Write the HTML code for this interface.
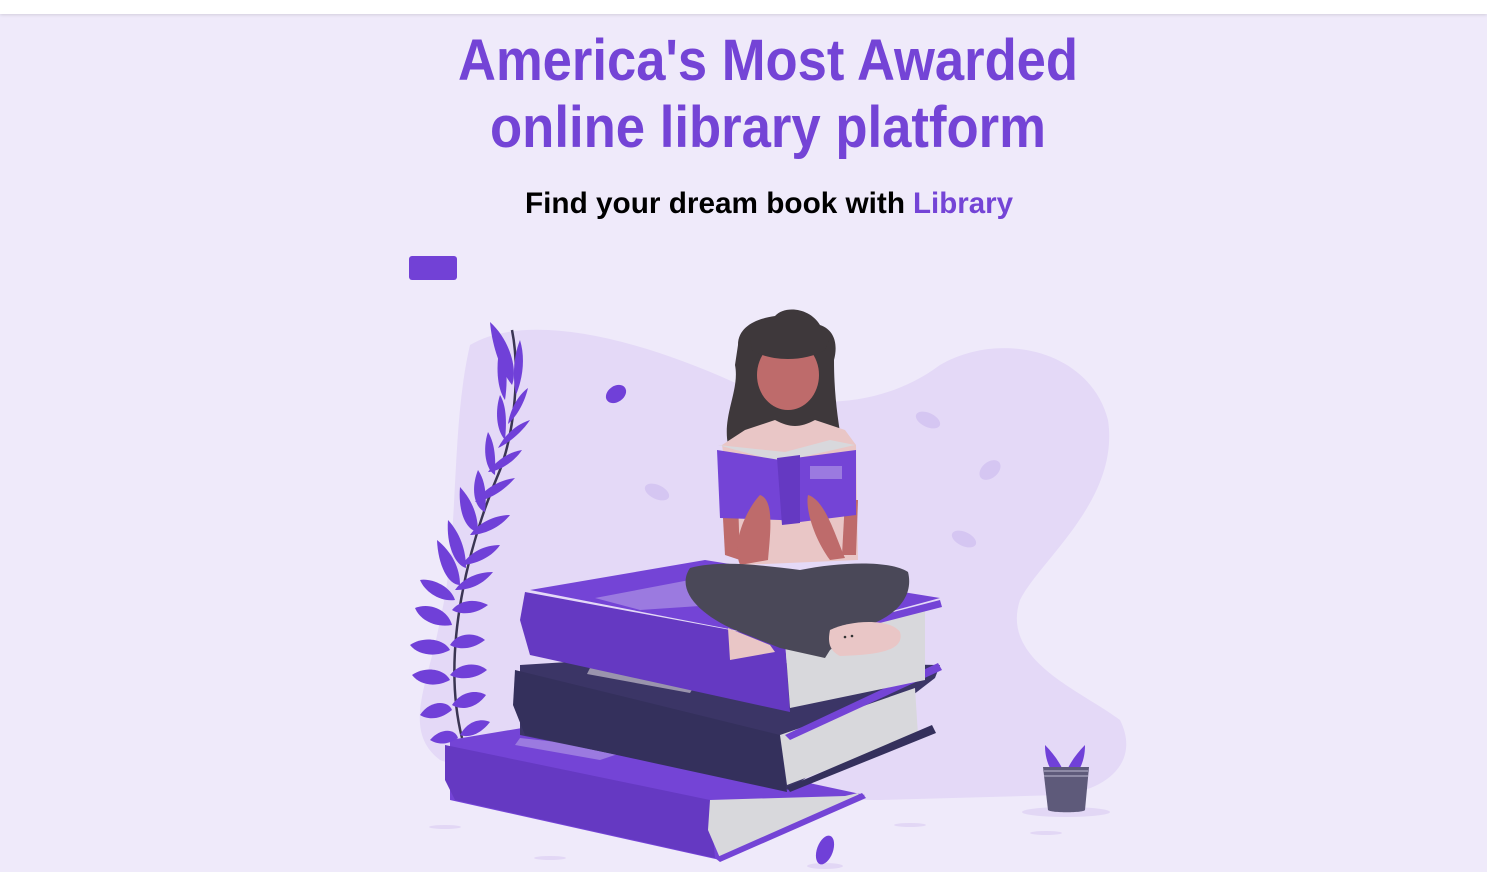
<!DOCTYPE html>
<html><head><meta charset="utf-8"><style>
html,body{margin:0;padding:0;width:1487px;height:872px;overflow:hidden;background:#efeafa;}
.top{position:absolute;left:0;top:0;width:1487px;height:14px;background:#fff;box-shadow:0 1px 3px rgba(0,0,0,0.12);}
svg{position:absolute;left:0;top:0;}
</style></head><body>
<svg width="1487" height="872" viewBox="0 0 1487 872" xmlns="http://www.w3.org/2000/svg">
<rect width="1487" height="872" fill="#efeafa"/>
<g font-family="Liberation Sans, sans-serif" font-weight="bold" text-anchor="start">
<text x="458" y="80" font-size="58" fill="#7444d6" textLength="620" lengthAdjust="spacingAndGlyphs">America's Most Awarded</text>
<text x="490" y="147" font-size="58" fill="#7444d6" textLength="556" lengthAdjust="spacingAndGlyphs">online library platform</text>
<text x="525" y="213" font-size="30" fill="#000" textLength="380" lengthAdjust="spacingAndGlyphs">Find your dream book with</text>
<text x="913" y="213" font-size="30" fill="#7444d6" textLength="100" lengthAdjust="spacingAndGlyphs">Library</text>
</g>
<rect x="409" y="256" width="48" height="24" rx="3" fill="#7241d6"/>
<!-- blob -->
<path d="M470,345 C520,315 620,330 740,385 C800,410 880,410 940,365 C1000,330 1090,350 1108,420 C1120,500 1040,560 1020,600 C1000,660 1080,690 1120,720 C1140,760 1110,790 1060,795 L880,800 C700,800 520,790 440,760 C400,730 430,680 440,620 C460,540 450,430 470,345 Z" fill="#e4d9f7"/>
<!-- shadows -->
<ellipse cx="1066" cy="812" rx="44" ry="5" fill="#e2d7f5"/>
<ellipse cx="445" cy="827" rx="16" ry="2" fill="#e2d7f5"/>
<ellipse cx="910" cy="825" rx="16" ry="2" fill="#e2d7f5"/>
<ellipse cx="550" cy="858" rx="16" ry="2" fill="#e2d7f5"/>
<ellipse cx="1046" cy="833" rx="16" ry="2" fill="#e2d7f5"/>
<ellipse cx="825" cy="866" rx="18" ry="3" fill="#e2d7f5"/>
<!-- bottom book -->
<polygon points="450,740 540,725 865,795 720,860 450,800" fill="#7444d6"/>
<polygon points="445,745 710,800 715,858 455,800 445,780" fill="#6539c2"/>
<polygon points="520,738 630,750 600,760 515,745" fill="#9b7ae0"/>
<polygon points="710,800 845,796 858,793 862,800 720,858 708,830" fill="#d8d8dc"/>
<polygon points="715,858 862,793 866,798 720,862" fill="#7444d6"/>
<!-- middle book -->
<polygon points="520,665 600,660 940,665 935,678 790,790 520,735" fill="#3b3566"/>
<polygon points="515,670 780,735 787,792 525,735 513,705" fill="#34305c"/>
<polygon points="590,668 695,685 690,693 587,674" fill="#9a94ad"/>
<polygon points="780,735 915,688 918,735 787,785" fill="#d8d8dc"/>
<polygon points="787,787 932,725 936,733 790,792" fill="#34305c"/>
<polygon points="785,735 938,663 942,670 790,740" fill="#7444d6"/>
<!-- top book -->
<polygon points="530,590 705,560 940,598 785,640" fill="#7444d6"/>
<polygon points="595,598 700,578 790,600 640,610" fill="#9b7ae0"/>
<polygon points="525,592 785,640 790,712 530,655 520,620" fill="#6539c2"/>
<polygon points="785,640 925,605 925,680 790,708" fill="#d8d8dc"/>
<polygon points="785,640 940,600 942,607 790,646" fill="#7444d6"/>
<!-- woman -->
<path d="M738,345 C738,325 760,318 775,316 C785,305 810,308 820,325 C835,330 838,345 834,360 C834,395 838,420 842,445 L728,445 C722,415 740,390 735,365 Z" fill="#3e383b"/>
<ellipse cx="788" cy="375" rx="31" ry="35" fill="#be6b6b"/>
<path d="M752,350 C770,362 805,362 825,350 L830,338 L750,338 Z" fill="#3e383b"/>
<path d="M775,420 C790,428 800,428 815,420 L845,430 L856,445 L858,560 L740,565 L722,445 L745,430 Z" fill="#e9c6c6"/>
<path d="M722,500 L738,500 L740,560 L725,555 Z" fill="#be6b6b"/>
<path d="M845,500 L858,500 L856,555 L842,555 Z" fill="#be6b6b"/>
<polygon points="718,445 785,452 830,440 855,445 780,462" fill="#d8d8dc"/>
<polygon points="717,450 780,460 780,520 720,518" fill="#7444d6"/>
<polygon points="780,460 856,450 856,515 800,522 780,520" fill="#7444d6"/>
<polygon points="777,458 800,455 800,523 782,525" fill="#6539c2"/>
<rect x="810" y="466" width="32" height="13" fill="#9b7ae0"/>
<path d="M760,495 C775,500 770,535 768,560 L740,565 C730,540 750,505 760,495 Z" fill="#be6b6b"/>
<path d="M808,495 C825,500 835,535 845,558 L830,560 C815,540 805,510 808,495 Z" fill="#be6b6b"/>
<path d="M690,568 C720,560 760,565 800,570 C840,562 890,560 908,572 C915,600 890,620 860,628 L830,650 L825,658 L780,648 L735,630 C700,615 675,590 690,568 Z" fill="#4a4858"/>
<path d="M830,630 C850,620 890,618 900,632 C905,650 880,655 840,656 C828,650 828,640 830,630 Z" fill="#e9c6c6"/>
<path d="M728,628 L770,645 L775,652 L730,660 Z" fill="#e9c6c6"/>
<circle cx="845" cy="637" r="1.3" fill="#333"/><circle cx="852" cy="636" r="1.3" fill="#333"/>
<!-- plant left -->
<path d="M462,738 C440,650 470,540 500,470 C515,430 520,370 512,330" stroke="#3a3553" stroke-width="2.5" fill="none"/>
<g fill="#7040d8">
<path d="M490,322 C510,340 518,370 512,385 C500,370 492,345 490,322 Z"/>
<path d="M500,345 C495,370 498,390 505,400 C508,380 507,360 500,345 Z"/>
<path d="M520,340 C526,360 522,380 516,395 C512,375 514,355 520,340 Z"/>
<path d="M528,388 C524,405 515,418 508,424 C510,410 518,395 528,388 Z"/>
<path d="M500,395 C495,410 496,430 505,440 C507,420 506,405 500,395 Z"/>
<path d="M530,420 C520,435 505,445 498,448 C505,435 515,425 530,420 Z"/>
<path d="M488,432 C482,450 486,470 495,475 C496,455 494,442 488,432 Z"/>
<path d="M522,450 C512,465 495,472 488,472 C495,462 508,452 522,450 Z"/>
<path d="M478,470 C470,490 475,508 485,512 C487,495 485,480 478,470 Z"/>
<path d="M515,478 C500,495 485,500 475,502 C485,488 500,480 515,478 Z"/>
<path d="M460,487 C458,510 465,530 478,532 C478,515 472,500 460,487 Z"/>
<path d="M510,515 C498,530 480,535 470,535 C478,523 495,515 510,515 Z"/>
<path d="M448,520 C446,545 455,565 466,568 C466,550 460,533 448,520 Z"/>
<path d="M500,545 C490,560 470,565 462,565 C470,552 485,545 500,545 Z"/>
<path d="M437,540 C438,565 448,585 460,585 C460,568 452,552 437,540 Z"/>
<path d="M493,572 C480,588 465,590 455,590 C463,578 478,572 493,572 Z"/>
<path d="M420,580 C430,578 450,585 455,600 C440,602 425,592 420,580 Z"/>
<path d="M488,605 C475,615 460,615 452,610 C460,600 475,598 488,605 Z"/>
<path d="M415,608 C430,602 448,610 452,625 C435,628 420,620 415,608 Z"/>
<path d="M485,640 C472,650 458,650 450,645 C458,632 475,632 485,640 Z"/>
<path d="M410,645 C425,635 445,640 450,650 C435,658 418,655 410,645 Z"/>
<path d="M487,670 C475,680 458,680 450,675 C460,662 478,662 487,670 Z"/>
<path d="M412,675 C427,665 445,670 450,680 C435,688 420,685 412,675 Z"/>
<path d="M486,695 C475,710 460,710 452,705 C462,690 478,690 486,695 Z"/>
<path d="M420,715 C430,700 448,700 452,710 C440,720 428,720 420,715 Z"/>
<path d="M490,722 C480,735 468,738 460,735 C468,720 482,718 490,722 Z"/>
<path d="M430,740 C440,728 455,728 458,738 C448,745 438,745 430,740 Z"/>
</g>
<!-- floating leaves -->
<ellipse cx="616" cy="394" rx="11" ry="8" transform="rotate(-35 616 394)" fill="#7040d8"/>
<ellipse cx="825" cy="850" rx="8" ry="15" transform="rotate(20 825 850)" fill="#7040d8"/>
<g fill="#d5c6f2">
<ellipse cx="928" cy="420" rx="13" ry="7" transform="rotate(25 928 420)"/>
<ellipse cx="657" cy="492" rx="13" ry="7" transform="rotate(25 657 492)"/>
<ellipse cx="990" cy="470" rx="12" ry="8" transform="rotate(-40 990 470)"/>
<ellipse cx="964" cy="539" rx="13" ry="7" transform="rotate(25 964 539)"/>
</g>
<!-- pot -->
<path d="M1045,745 C1052,752 1058,760 1062,768 L1050,768 C1046,760 1045,752 1045,745 Z" fill="#7040d8"/>
<path d="M1085,745 C1078,752 1072,760 1068,768 L1080,768 C1084,760 1085,752 1085,745 Z" fill="#7040d8"/>
<path d="M1043,767 L1089,767 L1085,810 C1084,813 1050,813 1048,810 Z" fill="#5e5a7a"/>
<rect x="1044" y="770" width="44" height="2" fill="#8e8aa6"/>
<rect x="1044" y="775" width="44" height="2" fill="#8e8aa6"/>
</svg>
<div class="top"></div>
</body></html>
